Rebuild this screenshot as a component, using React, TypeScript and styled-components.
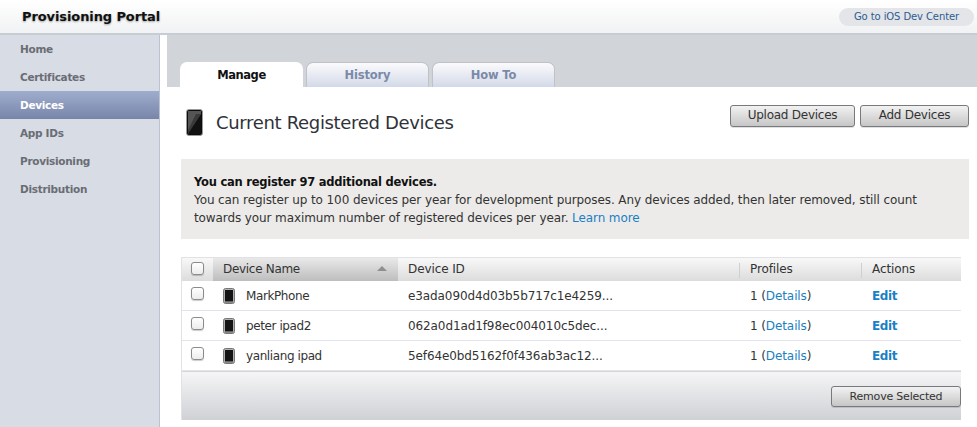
import React from "react";
import styled, { createGlobalStyle, css } from "styled-components";

const Global = createGlobalStyle`
  html, body { margin: 0; padding: 0; background: #fff; overflow: hidden; }
  body { font-family: "DejaVu Sans", "Liberation Sans", sans-serif; font-size: 12px; color: #333; }
  * { box-sizing: border-box; }
`;

const Page = styled.div`
  width: 977px;
  height: 427px;
  display: flex;
  flex-direction: column;
  overflow: hidden;
`;
const TopBar = styled.header`
  height: 35px;
  flex: none;
  display: flex;
  align-items: center;
  justify-content: space-between;
  padding: 0 3px 0 22px;
  background: linear-gradient(#ffffff, #f1f2f3);
  border-bottom: 2px solid #c8ccd4;
`;
const Title = styled.h1`
  margin: 0;
  font-size: 13px;
  font-weight: 700;
  letter-spacing: -0.1px;
  color: #111;
  text-shadow: 0 1px 2px rgba(0, 0, 0, 0.35);
`;
const DevCenter = styled.a`
  width: 135px;
  height: 18px;
  border-radius: 9px;
  background: #e3e5e9;
  color: #2d5c8f;
  font-size: 10px;
  letter-spacing: -0.1px;
  display: flex;
  align-items: center;
  justify-content: center;
`;
const Body = styled.div`
  flex: 1;
  display: flex;
  min-height: 0;
`;
const Sidebar = styled.nav`
  width: 160px;
  flex: none;
  background: #d8dce5;
  border-right: 1px solid #bcc2cf;
`;
const NavItem = styled.div<{ $active?: boolean }>`
  height: 28px;
  padding-left: 20px;
  display: flex;
  align-items: center;
  font-size: 10.5px;
  letter-spacing: -0.3px;
  font-weight: 700;
  color: #6a6d74;
  ${(p) =>
    p.$active &&
    css`
      color: #fff;
      background: linear-gradient(#9fadcd, #7885aa);
    `}
`;
const Main = styled.main`
  flex: 1;
  padding-left: 7px;
  display: flex;
  flex-direction: column;
  min-width: 0;
`;
const TabBand = styled.div`
  height: 52px;
  flex: none;
  background: #d1d4d8;
  display: flex;
  align-items: flex-end;
  gap: 3px;
  padding-left: 13px;
`;
const Tab = styled.div<{ $active?: boolean }>`
  width: 123px;
  height: 25px;
  border-radius: 7px 7px 0 0;
  display: flex;
  align-items: center;
  justify-content: center;
  font-size: 11.5px;
  letter-spacing: -0.15px;
  font-weight: 700;
  ${(p) =>
    p.$active
      ? css`
          background: #fff;
          color: #111;
          letter-spacing: -0.45px;
          padding-top: 1px;
        `
      : css`
          background: linear-gradient(#fbfbfd, #d3d9e8);
          color: #7b8aa8;
          border: 1px solid #c0c2c6;
          border-bottom: none;
        `}
`;
const Content = styled.div`
  padding: 0 8px 0 14px;
`;
const HeadRow = styled.div`
  height: 72px;
  display: flex;
  align-items: flex-start;
  justify-content: space-between;
`;
const HeadLeft = styled.div`
  display: flex;
  align-items: center;
  gap: 13px;
  padding: 22px 0 0 5px;
`;
const Heading = styled.h2`
  margin: 0;
  font-size: 18px;
  font-weight: 400;
  letter-spacing: -0.33px;
  color: #2f3238;
`;
const Actions = styled.div`
  display: flex;
  gap: 5px;
  padding-top: 18px;
`;
const Btn = styled.button<{ $w: number; $small?: boolean }>`
  width: ${(p) => p.$w}px;
  height: ${(p) => (p.$small ? 21 : 22)}px;
  padding: ${(p) => (p.$small ? "0" : "0 0 2px")};
  border: 1px solid #77797c;
  border-radius: 3px;
  background: linear-gradient(#f2f2f2, #c6c6c6);
  font-family: inherit;
  font-size: ${(p) => (p.$small ? 11 : 12)}px;
  letter-spacing: ${(p) => (p.$small ? "-0.2px" : "-0.25px")};
  color: #333;
  box-shadow: 0 1px 0 rgba(0, 0, 0, 0.12);
`;
const Notice = styled.section`
  height: 80px;
  background: #ecebe9;
  padding: 14px 13px 0;
  font-size: 12px;
  line-height: 18px;
  letter-spacing: -0.1px;
  margin-bottom: 18px;
`;
const Strong = styled.strong`
  display: block;
  font-size: 11.5px;
  letter-spacing: -0.24px;
  color: #111;
`;
const Link = styled.a`
  color: #1a7fc4;
`;
const TableWrap = styled.section`
  width: 780px;
  height: 163px;
  border-left: 1px solid #e2e2e6;
  border-top: 1px solid #e2e2e6;
  display: flex;
  flex-direction: column;
`;
const cols = "31px 185px 342px 122px 1fr";
const HeaderRow = styled.div`
  height: 23px;
  flex: none;
  display: grid;
  grid-template-columns: ${cols};
  background: linear-gradient(#f8f8f8, #dcdcdc);
  font-size: 12px;
  letter-spacing: -0.1px;
  color: #333;
`;
const HeadCell = styled.div<{ $divider?: boolean; $sorted?: boolean }>`
  display: flex;
  align-items: center;
  justify-content: space-between;
  padding: 0 11px 2px 10px;
  position: relative;
  ${(p) =>
    p.$sorted &&
    css`
      letter-spacing: -0.3px;
      background: linear-gradient(#e9e9e9, #bdbdbd);
    `}
  ${(p) =>
    p.$divider &&
    css`
      &::before {
        content: "";
        position: absolute;
        left: -1px;
        top: 5px;
        bottom: 3px;
        width: 1px;
        background: #cfcfcf;
      }
    `}
`;
const SortArrow = styled.span`
  width: 0;
  height: 0;
  border-left: 5px solid transparent;
  border-right: 5px solid transparent;
  border-bottom: 5px solid #8f8f8f;
`;
const CheckCell = styled.div<{ $head?: boolean }>`
  display: flex;
  justify-content: center;
  align-items: flex-start;
  padding: ${(p) => (p.$head ? 4 : 6)}px 1px 0 0;
`;
const Check = styled.span`
  width: 13px;
  height: 13px;
  border: 1px solid #8b8b8b;
  border-radius: 3px;
  background: linear-gradient(#ffffff, #ececec);
  box-shadow: 0 1px 1px rgba(0, 0, 0, 0.2);
`;
const Row = styled.div`
  height: 30px;
  flex: none;
  display: grid;
  grid-template-columns: ${cols};
  border-bottom: 1px solid #e3e3ef;
  font-size: 12px;
  letter-spacing: -0.1px;
  color: #333;
`;
const NameCell = styled.div`
  display: flex;
  align-items: center;
  gap: 11px;
  padding-left: 10px;
  letter-spacing: -0.4px;
`;
const Cell = styled.div`
  display: flex;
  align-items: center;
  padding-left: 10px;
`;
const Edit = styled.a`
  color: #1a7fc4;
  font-weight: 700;
  letter-spacing: -0.4px;
`;
const Footer = styled.div`
  flex: 1;
  display: flex;
  justify-content: flex-end;
  align-items: flex-start;
  padding: 14px 0 0 0;
  border-top: 1px solid #d6d6d6;
  background: linear-gradient(#f5f5f6, #cfd1d5);
`;

const BigPhone = () => (
  <svg width="17" height="27" viewBox="0 0 17 27">
    <rect x="0.5" y="0.5" width="16" height="26" rx="2.5" fill="#0c0c0c" stroke="#9a9a9a" />
    <rect x="2" y="2" width="13" height="23" fill="#111" />
    <path d="M2 2 H15 V5 L2 23 Z" fill="#555" />
    <path d="M2 21 L10 5 H15 L2 25 Z" fill="#3a3a3a" />
  </svg>
);
const SmallPhone = () => (
  <svg width="12" height="16" viewBox="0 0 12 16">
    <rect x="0.5" y="0.5" width="11" height="15" rx="2" fill="#b0b0b0" stroke="#777" />
    <rect x="2" y="2" width="8" height="11" fill="#141414" />
    <rect x="2" y="13" width="8" height="1.5" fill="#666" />
  </svg>
);

const devices = [
  ["MarkPhone", "e3ada090d4d03b5b717c1e4259..."],
  ["peter ipad2", "062a0d1ad1f98ec004010c5dec..."],
  ["yanliang ipad", "5ef64e0bd5162f0f436ab3ac12..."],
];

export default function App() {
  return (
    <Page>
      <Global />
      <TopBar>
        <Title>Provisioning Portal</Title>
        <DevCenter>Go to iOS Dev Center</DevCenter>
      </TopBar>
      <Body>
        <Sidebar>
          <NavItem>Home</NavItem>
          <NavItem>Certificates</NavItem>
          <NavItem $active>Devices</NavItem>
          <NavItem>App IDs</NavItem>
          <NavItem>Provisioning</NavItem>
          <NavItem>Distribution</NavItem>
        </Sidebar>
        <Main>
          <TabBand>
            <Tab $active>Manage</Tab>
            <Tab>History</Tab>
            <Tab>How To</Tab>
          </TabBand>
          <Content>
            <HeadRow>
              <HeadLeft>
                <BigPhone />
                <Heading>Current Registered Devices</Heading>
              </HeadLeft>
              <Actions>
                <Btn $w={125}>Upload Devices</Btn>
                <Btn $w={109}>Add Devices</Btn>
              </Actions>
            </HeadRow>
            <Notice>
              <Strong>You can register 97 additional devices.</Strong>
              You can register up to 100 devices per year for development purposes. Any devices added, then later removed, still count towards your maximum number of registered devices per year. <Link>Learn more</Link>
            </Notice>
            <TableWrap>
              <HeaderRow>
                <CheckCell $head>
                  <Check />
                </CheckCell>
                <HeadCell $sorted>
                  Device Name
                  <SortArrow />
                </HeadCell>
                <HeadCell>Device ID</HeadCell>
                <HeadCell $divider>Profiles</HeadCell>
                <HeadCell $divider>Actions</HeadCell>
              </HeaderRow>
              {devices.map(([name, id]) => (
                <Row key={name}>
                  <CheckCell>
                    <Check />
                  </CheckCell>
                  <NameCell>
                    <SmallPhone />
                    {name}
                  </NameCell>
                  <Cell>{id}</Cell>
                  <Cell>
                    1&nbsp;(<Link>Details</Link>)
                  </Cell>
                  <Cell>
                    <Edit>Edit</Edit>
                  </Cell>
                </Row>
              ))}
              <Footer>
                <Btn $w={130} $small>Remove Selected</Btn>
              </Footer>
            </TableWrap>
          </Content>
        </Main>
      </Body>
    </Page>
  );
}
